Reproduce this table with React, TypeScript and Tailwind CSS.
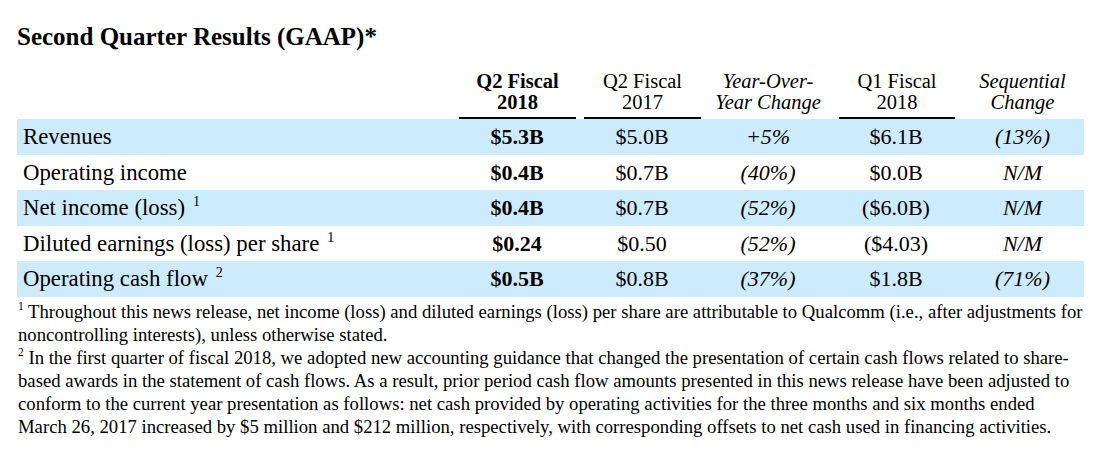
const rows = [
  { label: "Revenues", note: "", cur: "$5.3B", prev: "$5.0B", yoy: "+5%", q1: "$6.1B", seq: "(13%)" },
  { label: "Operating income", note: "", cur: "$0.4B", prev: "$0.7B", yoy: "(40%)", q1: "$0.0B", seq: "N/M" },
  { label: "Net income (loss)", note: "1", cur: "$0.4B", prev: "$0.7B", yoy: "(52%)", q1: "($6.0B)", seq: "N/M" },
  { label: "Diluted earnings (loss) per share", note: "1", cur: "$0.24", prev: "$0.50", yoy: "(52%)", q1: "($4.03)", seq: "N/M" },
  { label: "Operating cash flow", note: "2", cur: "$0.5B", prev: "$0.8B", yoy: "(37%)", q1: "$1.8B", seq: "(71%)" },
];

const serif = "font-['Liberation_Serif','Times_New_Roman',serif]";

const App = () => {
  return (
    <div className={`bg-white text-black ${serif} pl-[17px] pt-[22px] w-[1105px] h-[463px] overflow-hidden`}>
      <h1 className="text-[25px] leading-[29px] font-bold">Second Quarter Results (GAAP)*</h1>

      <div className="w-[1067px] mt-[20px]">
        {/* header */}
        <div className="grid grid-cols-[438px_124px_126px_126px_130px_123px] text-[20.5px] leading-[21px] text-center">
          <div />
          <div className="flex items-end">
            <div className="w-full ml-[4px] mr-[3px] pb-[4px] border-b-2 border-black font-bold">
              Q2 Fiscal<br />2018
            </div>
          </div>
          <div className="flex items-end">
            <div className="w-full ml-[5px] mr-[4px] pb-[4px] border-b-2 border-black">
              Q2 Fiscal<br />2017
            </div>
          </div>
          <div className="flex items-end">
            <div className="w-full pb-[4px] border-b-2 border-transparent italic">
              Year-Over-<br />Year Change
            </div>
          </div>
          <div className="flex items-end">
            <div className="w-full ml-[8px] mr-[6px] pb-[4px] border-b-2 border-black">
              Q1 Fiscal<br />2018
            </div>
          </div>
          <div className="flex items-end">
            <div className="w-full pb-[4px] border-b-2 border-transparent italic">
              Sequential<br />Change
            </div>
          </div>
        </div>

        {/* body rows */}
        {rows.map((r, i) => (
          <div
            key={r.label}
            className={`grid grid-cols-[438px_124px_126px_126px_130px_123px] h-[35.5px] items-center text-[22px] leading-[35.5px] ${
              i % 2 === 0 ? "bg-[#ccecfd]" : "bg-white"
            }`}
          >
            <div className="pl-[6px] whitespace-nowrap text-[22.8px]">
              {r.label}
              {r.note && <sup className="ml-[8px] text-[14px] top-[-9px]">{r.note}</sup>}
            </div>
            <div className="text-center font-bold">{r.cur}</div>
            <div className="text-center">{r.prev}</div>
            <div className="text-center italic">{r.yoy}</div>
            <div className="text-center">{r.q1}</div>
            <div className="text-center italic">{r.seq}</div>
          </div>
        ))}
      </div>

      {/* footnotes */}
      <div className="mt-[3px] pl-[1px] text-[18.7px] leading-[23px] whitespace-nowrap">
        <p>
          <sup className="text-[11.5px] top-[-8px]">1</sup> Throughout this news release, net income (loss) and diluted earnings (loss) per share are attributable to Qualcomm (i.e., after adjustments for
          <br />
          noncontrolling interests), unless otherwise stated.
        </p>
        <p>
          <sup className="text-[11.5px] top-[-8px]">2</sup> In the first quarter of fiscal 2018, we adopted new accounting guidance that changed the presentation of certain cash flows related to share-
          <br />
          based awards in the statement of cash flows. As a result, prior period cash flow amounts presented in this news release have been adjusted to
          <br />
          conform to the current year presentation as follows: net cash provided by operating activities for the three months and six months ended
          <br />
          March 26, 2017 increased by $5 million and $212 million, respectively, with corresponding offsets to net cash used in financing activities.
        </p>
      </div>
    </div>
  );
};

export default App;
